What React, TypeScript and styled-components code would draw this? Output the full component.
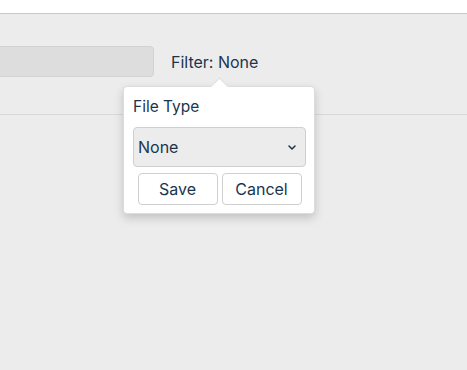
import React, { useState } from "react";
import styled, { createGlobalStyle } from "styled-components";

const GlobalStyle = createGlobalStyle`
  html, body {
    margin: 0;
    padding: 0;
    background: #ececec;
    font-family: Inter, "Noto Sans", sans-serif;
    color: #1b354c;
  }
`;

const Page = styled.div`
  width: 467px;
  height: 370px;
  background: #ececec;
  overflow: hidden;
`;

const Header = styled.div`
  height: 13px;
  background: #ffffff;
  border-bottom: 1px solid #c9c9c9;
`;

const Toolbar = styled.div`
  display: flex;
  align-items: flex-start;
  gap: 17px;
  height: 101px;
  padding-top: 32px;
  box-sizing: border-box;
  border-bottom: 1px solid #d8d8d8;
`;

const SearchBox = styled.div`
  margin-left: -10px;
  width: 164px;
  height: 31px;
  box-sizing: border-box;
  background: #dddddd;
  border: 1px solid #d2d2d2;
  border-radius: 4px;
`;

const FilterWrap = styled.div`
  position: relative;
  height: 31px;
  display: flex;
  align-items: center;
`;

const FilterLabel = styled.span`
  font-size: 16px;
  line-height: 20px;
  padding-top: 1px;
  cursor: pointer;
`;

const Popover = styled.div`
  position: absolute;
  left: -48px;
  top: 40px;
  width: 192px;
  box-sizing: border-box;
  background: #ffffff;
  border: 1px solid #dcdcdc;
  border-radius: 4px;
  box-shadow: 0 4px 10px rgba(0, 0, 0, 0.18);
  padding: 10px 8px 8px 9px;
  z-index: 10;

  &::before {
    content: "";
    position: absolute;
    top: -7px;
    left: 89px;
    width: 12px;
    height: 12px;
    background: #ffffff;
    border-left: 1px solid #dcdcdc;
    border-top: 1px solid #dcdcdc;
    transform: rotate(45deg);
  }
`;

const FieldLabel = styled.div`
  font-size: 15.5px;
  line-height: 20px;
  margin-bottom: 10px;
`;

const SelectBox = styled.div`
  position: relative;
  height: 40px;
  box-sizing: border-box;
  background: #ececec;
  border: 1px solid #cfcfcf;
  border-radius: 4px;
  display: flex;
  align-items: center;
  padding: 0 9px 0 4px;
  font-size: 16px;
  justify-content: space-between;
`;

const Buttons = styled.div`
  display: flex;
  justify-content: center;
  gap: 4px;
  margin-top: 6px;
`;

const Button = styled.button`
  width: 80px;
  height: 32px;
  box-sizing: border-box;
  background: #ffffff;
  border: 1px solid #cfcfcf;
  border-radius: 4px;
  font-family: Inter, "Noto Sans", sans-serif;
  font-size: 16px;
  color: #1b354c;
  cursor: pointer;
`;

const Chevron = () => (
  <svg width="8" height="5" viewBox="0 0 8 5" fill="none">
    <path d="M1 1l3 3 3-3" stroke="#1b354c" strokeWidth="1.5" strokeLinecap="round" strokeLinejoin="round" />
  </svg>
);

export default function App() {
  const [value] = useState("None");
  return (
    <Page>
      <GlobalStyle />
      <Header />
      <Toolbar>
        <SearchBox />
        <FilterWrap>
          <FilterLabel>Filter: {value}</FilterLabel>
          <Popover>
            <FieldLabel>File Type</FieldLabel>
            <SelectBox>
              <span>{value}</span>
              <Chevron />
            </SelectBox>
            <Buttons>
              <Button>Save</Button>
              <Button>Cancel</Button>
            </Buttons>
          </Popover>
        </FilterWrap>
      </Toolbar>
    </Page>
  );
}
